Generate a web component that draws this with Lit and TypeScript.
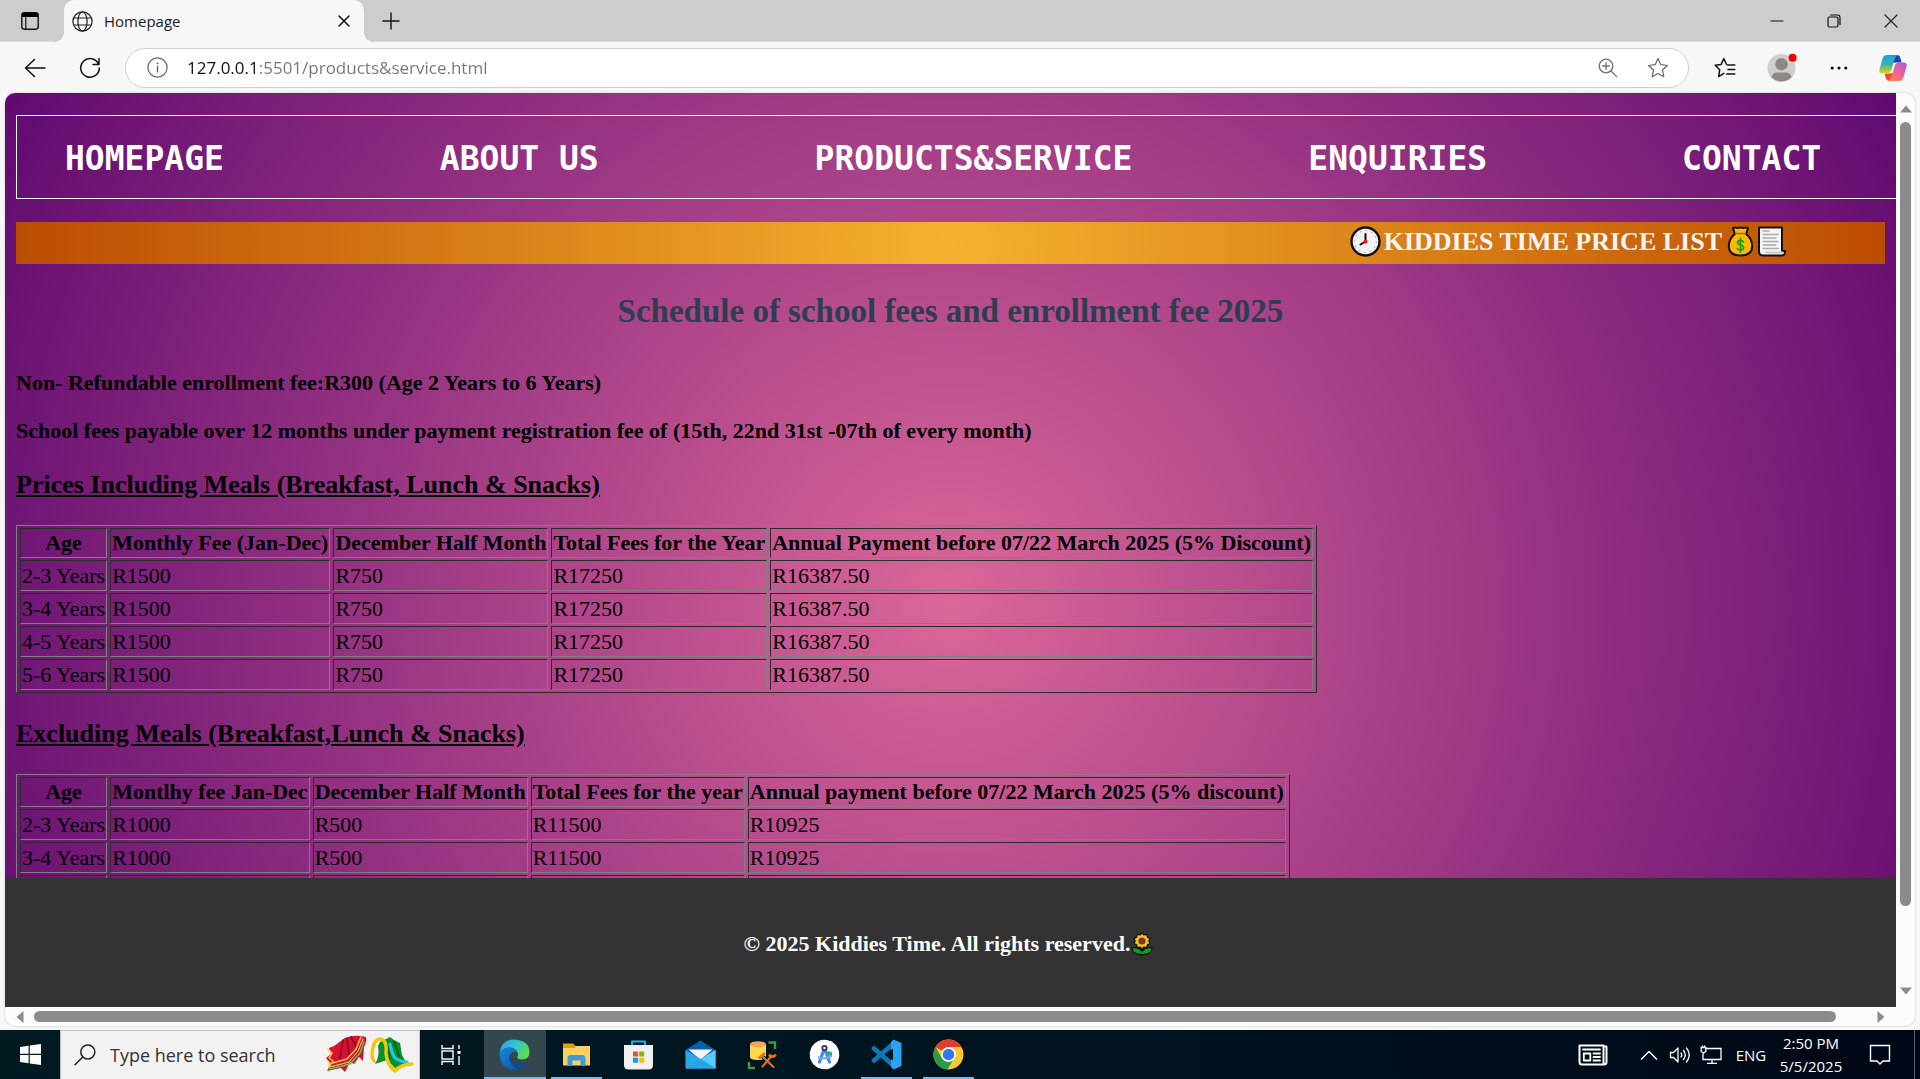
import { LitElement, html, css, svg } from "lit";
import { customElement } from "lit/decorators.js";
import { classMap } from "lit/directives/class-map.js";

const icon = (size: number, box: string, body: unknown) => html`<svg
  width=${size} height=${size} viewBox=${box} fill="none" stroke-linecap="round" stroke-linejoin="round" aria-hidden="true">${body}</svg>`;

const icons = {
  tabs: icon(20, "0 0 20 20", svg`<rect x="1.8" y="1.8" width="16.4" height="16.4" rx="2.6" stroke="#111" stroke-width="1.4"/><path d="M2 3.5Q2 2 4 2H16Q18 2 18 3.5V6H2Z" fill="#000"/><path d="M5.8 6V18" stroke="#111" stroke-width="1.2"/>`),
  globe: icon(21, "0 0 21 21", svg`<g stroke="#222" stroke-width="1.2"><circle cx="10.5" cy="10.5" r="9.6"/><ellipse cx="10.5" cy="10.5" rx="4.6" ry="9.6"/><path d="M1.8 7H19.2M1.8 14H19.2"/></g>`),
  close: icon(12, "0 0 12 12", svg`<path d="M1 1L11 11M11 1L1 11" stroke="#111" stroke-width="1.5"/>`),
  plus: icon(18, "0 0 18 18", svg`<path d="M9 1V17M1 9H17" stroke="#111" stroke-width="1.4"/>`),
  minimize: icon(14, "0 0 14 14", svg`<path d="M1 7H13" stroke="#111" stroke-width="1.2"/>`),
  restore: icon(14, "0 0 14 14", svg`<g stroke="#111" stroke-width="1.2"><rect x="1" y="3" width="10" height="10" rx="1.5"/><path d="M3.6 1H10.5Q13 1 13 3.5V10.4"/></g>`),
  exit: icon(14, "0 0 14 14", svg`<path d="M1 1L13 13M13 1L1 13" stroke="#222" stroke-width="1.2"/>`),
  back: icon(22, "0 0 22 22", svg`<path d="M21 11H1.5M10.5 2.5L1.5 11L10.5 19.5" stroke="#111" stroke-width="1.5"/>`),
  reload: icon(22, "0 0 22 22", svg`<path d="M19.6 7.4A9.3 9.3 0 1 0 20.3 11M20 1.6V7.6H14" stroke="#111" stroke-width="1.5"/>`),
  info: icon(21, "0 0 21 21", svg`<circle cx="10.5" cy="10.5" r="9.6" stroke="#666" stroke-width="1.2"/><path d="M10.5 9.5V15" stroke="#666" stroke-width="1.4"/><circle cx="10.5" cy="6.4" r="1" fill="#666"/>`),
  zoom: icon(20, "0 0 20 20", svg`<g stroke="#707070" stroke-width="1.3"><circle cx="8" cy="8" r="6.8"/><path d="M13 13L18.6 18.6M8 4.6V11.4M4.6 8H11.4"/></g>`),
  star: icon(22, "0 0 22 22", svg`<path d="M11 1.6L13.8 7.7L20.4 8.5L15.5 13L16.8 19.8L11 16.5L5.2 19.8L6.5 13L1.6 8.5L8.2 7.7Z" stroke="#666" stroke-width="1.2"/>`),
  favorites: icon(22, "0 0 22 22", svg`<path d="M12.4 7.2L9.8 1.6L7.1 7.4L1.2 8.2L5.7 12.7L4.7 19.6L9.8 16.4M13.6 8H20.8M14 12.5H20.8M12.6 17H20.8" stroke="#111" stroke-width="1.5"/>`),
  profile: icon(34, "0 0 34 34", svg`<circle cx="16.5" cy="17" r="14" fill="#d0cecb"/><circle cx="16.5" cy="13.2" r="6.2" fill="#8d8986"/><path d="M6.4 26Q8 21.5 12 21.5H21Q25 21.5 26.6 26A14 14 0 0 1 6.4 26Z" fill="#8d8986"/><circle cx="27.6" cy="6.8" r="4" fill="#f00000"/>`),
  more: icon(18, "0 0 18 18", svg`<g fill="#111"><circle cx="2.2" cy="9" r="1.6"/><circle cx="9" cy="9" r="1.6"/><circle cx="15.8" cy="9" r="1.6"/></g>`),
  copilot: icon(28, "0 0 28 28", svg`
    <defs>
      <linearGradient id="cpA" x1="0" y1="0" x2="0" y2="1"><stop offset="0" stop-color="#1b9af0"/><stop offset=".5" stop-color="#37b6a0"/><stop offset="1" stop-color="#f3cf10"/></linearGradient>
      <linearGradient id="cpB" x1="1" y1="0" x2="0" y2="1"><stop offset="0" stop-color="#a35be8"/><stop offset=".5" stop-color="#f0609a"/><stop offset="1" stop-color="#ff8b3d"/></linearGradient>
    </defs>
    <path d="M14 9L16 3Q17 1 18 1Q20.600 1 21.400 4L22.600 8.600H17Z" fill="#1745b8"/>
    <path d="M14 19L12 25Q11 27 9.800 27Q7.600 27 6.800 24L5.600 19.400H11Z" fill="#ee4a33"/>
    <path d="M8 1H18.600Q16.500 1.500 15.600 5L12.500 15.600Q11.200 19.600 8 19.600H3Q-.6 19.600 .6 15L3.400 5Q4.600 1 8 1Z" fill="url(#cpA)"/>
    <path d="M20 27H9.400Q11.500 26.500 12.400 23L15.500 12.400Q16.800 8.400 20 8.400H25Q28.600 8.400 27.400 13L24.600 23Q23.400 27 20 27Z" fill="url(#cpB)"/>`),
  clock: icon(31, "0 0 31 31", svg`<circle cx="15.500" cy="15.500" r="14" fill="#f2f2f2" stroke="#111" stroke-width="2.400"/><circle cx="15.500" cy="15.500" r="11" stroke="#bbb" stroke-width="1.200" stroke-dasharray="1 4.760"/><path d="M15.500 8V15.500L10.500 18.500" stroke="#111" stroke-width="2"/><circle cx="15.500" cy="15.500" r="2" fill="#e8102c"/>`),
  bag: icon(31, "0 0 31 31", svg`<path d="M8 2Q10 .8 12 2Q15.500 .8 19 2Q21 .8 23 2L21.200 8Q27.200 13 27.200 20Q27.200 29.500 15.500 29.500Q3.800 29.500 3.800 20Q3.800 13 9.800 8Z" fill="#fdb900" stroke="#111" stroke-width="2"/><path d="M10.500 7.500H20.500" stroke="#9a6c00" stroke-width="1.500"/><path d="M18.500 15.900Q17.200 14.300 15.500 14.300Q12.600 14.300 12.600 16.600Q12.600 18.300 15.500 19Q18.600 19.600 18.600 21.600Q18.600 24 15.500 24Q13.400 24 12.200 22.400M15.500 12V26" stroke="#12a012" stroke-width="1.700"/>`),
  page: icon(31, "0 0 31 31", svg`<path d="M3 1.500H26V25H29Q29 29.500 26 29.500H7Q3 29.500 3 25.500Z" fill="#f4f4f4" stroke="#111" stroke-width="2"/><path d="M10 26.500H27" stroke="#c9c9d2" stroke-width="2"/><path d="M7 5H13M7 8.500H22M7 12H20M7 15.500H22M7 19H20M7 22.500H22" stroke="#aaa" stroke-width="1.300"/>`),
  sunflower: icon(24, "0 0 24 24", svg`<path d="M12 12V22" stroke="#111" stroke-width="4"/><path d="M2 16Q8 14.500 12 19Q16 14.500 22 16Q22 22.500 12 22.500Q2 22.500 2 16Z" fill="#169a1c" stroke="#111" stroke-width="1.200"/><path d="M12 1L14 3L16.800 2.400L17.400 5.200L20 6.600L18.800 9L20 11.600L17.400 12.800L16.600 15.600L14 15L12 17L10 15L7.400 15.600L6.600 12.800L4 11.600L5.200 9L4 6.600L6.600 5.200L7.200 2.400L10 3Z" fill="#ffbe2e" stroke="#111" stroke-width="1.200"/><circle cx="12" cy="9" r="3.600" fill="#7a3d20"/>`),
  windows: icon(21, "0 0 21 21", svg`<path d="M0 3L8.600 1.800V9.800H0ZM9.800 1.600L21 0V9.800H9.800ZM0 11H8.600V19.200L0 18ZM9.800 11H21V21L9.800 19.400Z" fill="#fff"/>`),
  search: icon(22, "0 0 22 22", svg`<circle cx="13.800" cy="8" r="7" stroke="#222" stroke-width="1.500"/><path d="M8.800 13L1 20.800" stroke="#222" stroke-width="1.500"/>`),
  shawl: html`<svg width="90" height="42" viewBox="0 0 90 42" fill="none" stroke-linejoin="round" stroke-linecap="round" aria-hidden="true">
    <path d="M4 14L9 12L20 4Q30 0 41 3Q42 8 39 13L38 27L34 23L29 30L25 28L20 38L16 34L2 37L6 30L1 24L6 20Z" fill="#d3122f"/>
    <path d="M18 6L15 24M22 4L24 20M26 3L32 14" stroke="#93051c" stroke-width="1.600"/>
    <path d="M36 3L31 15L22 25L4 30M3 15L7 19L4 24L8 27L4 33" stroke="#f3c63a" stroke-width="1.500"/>
    <path d="M39 8L35 19L25 30L5 35" stroke="#58c94b" stroke-width="1.500"/><path d="M38 5L33 17L24 28L5 33" stroke="#ffe27a" stroke-width="1"/>
    <path d="M55 8Q61 5 65 3L69 6L75 9L77 21L82 30L72 36L62 26L50 30Q55 22 53 12Z" fill="#0b8f2c"/>
    <path d="M61 9L65 25M69 8L74 22" stroke="#056b1d" stroke-width="2.500"/>
    <path d="M65 10Q67 20 70 24Q76 28 82 28" stroke="#22c6e8" stroke-width="3.200"/>
    <path d="M49 27Q45 23 49 10Q52 3 58 6Q62 9 61 19Q62 31 70 37Q76 30 87 30" stroke="#eec70c" stroke-width="3.500"/>
  </svg>`,
  taskView: icon(22, "0 0 22 22", svg`<g stroke="#fff" stroke-width="1.400" stroke-linecap="butt" stroke-linejoin="miter"><path d="M2 1V4.500H13V1M2 21V17.500H13V21"/><rect x="2" y="7" width="11" height="8"/><path d="M19 1V5M19 12V21"/></g><rect x="17.500" y="7" width="3" height="3" fill="#fff"/>`),
  edge: icon(31, "0 0 31 31", svg`
    <defs>
      <linearGradient id="edA" x1="0" y1=".2" x2="1" y2=".6"><stop offset="0" stop-color="#27a9e8"/><stop offset=".5" stop-color="#33c3c9"/><stop offset="1" stop-color="#62dc4c"/></linearGradient>
      <linearGradient id="edB" x1="0" y1="0" x2="1" y2="1"><stop offset="0" stop-color="#1489dd"/><stop offset="1" stop-color="#0b55a8"/></linearGradient>
    </defs>
    <path d="M.5 14Q2 .5 15.500 .5Q30.500 1.500 30.500 13.500Q30 20.500 23 20.500Q17.500 20.500 18.500 17.500Q20 14.500 17.500 11.500Q13 7 7 9Q2 10.500 .5 14Z" fill="url(#edA)"/>
    <path d="M.5 15Q2 8.500 9.500 8.500Q16.500 8.800 18.500 13.500Q14 11.500 11.500 15Q8.500 20 13 25.500Q17 29.500 21 29.300Q18 30.800 14.500 30.500Q1 29.500 .5 15Z" fill="url(#edB)"/>
    <path d="M11.500 15Q9.500 24 18.500 24.700Q24 25 28.300 22.500Q25.500 28.500 20 29.700Q13 28.500 11 22.500Q9.500 18.500 11.500 15Z" fill="#124a91"/>`),
  explorer: icon(29, "0 0 29 29", svg`<path d="M1 3.500H11L14 6.500V11H1Z" fill="#e2a008"/><path d="M1 8H12L14 6H28V25.500H1Z" fill="#fdd062"/><path d="M5.500 26V18Q5.500 15 8.500 15H20.500Q23.500 15 23.500 18V26H18.500V20.500H10.500V26Z" fill="#3f9ad8"/>`),
  store: icon(31, "0 0 31 31", svg`<path d="M9 8V2.500H22V8" stroke="#29a9e6" stroke-width="2.200"/><path d="M1 6H30V26Q30 30.500 25.500 30.500H5.500Q1 30.500 1 26Z" fill="#f0f0f0"/><path d="M10 12.500H15V17.500H10Z" fill="#f25022"/><path d="M16.200 12.500H21.200V17.500H16.200Z" fill="#7fba00"/><path d="M10 18.700H15V23.700H10Z" fill="#00a4ef"/><path d="M16.200 18.700H21.200V23.700H16.200Z" fill="#ffb900"/>`),
  mail: icon(31, "0 0 31 31", svg`<path d="M.5 11L15.500 1.500L30.500 11V17H.5Z" fill="#0a5cb0"/><path d="M3.500 10.500H27.500L15.500 21Z" fill="#f4f4f4"/><path d="M.5 11L15.500 20L30.500 11V29.500H.5Z" fill="#2aa9ea"/><path d="M30.500 11V29.500L15.500 20Z" fill="#55cdfb"/><path d="M.5 29.500L15.500 20L30.500 29.500Z" fill="#27a4e6"/>`),
  database: icon(30, "0 0 30 30", svg`<path d="M3 4V17Q3 20 11 20Q19 20 19 17V4Z" fill="#fbd84c"/><ellipse cx="11" cy="4.200" rx="8" ry="3" fill="#f2a65a"/><path d="M21.500 2.500H28V9M2 22V28H8" stroke="#3f9a48" stroke-width="2.400" stroke-linecap="butt" stroke-linejoin="miter"/><path d="M15.500 26.500L25 15.500M16 17L26.500 27" stroke="#001721" stroke-width="4"/><path d="M15.500 26.500L25 15.500M16 17L26.500 27" stroke="#e8731b" stroke-width="2"/><path d="M12.500 17.500L17 13.800M22.800 15.500Q25 18 28 15.500" stroke="#e8731b" stroke-width="2.800"/>`),
  studio: icon(31, "0 0 31 31", svg`<circle cx="15.500" cy="15.500" r="13.600" fill="#fff"/><circle cx="15.500" cy="15.500" r="13.600" stroke="#fff" stroke-width="2.400" stroke-dasharray="3.500 1.800"/><circle cx="20" cy="15.500" r="3.200" fill="#34a853"/><path d="M15.500 9L10.500 23M15.500 9L20.500 23" stroke="#4285f4" stroke-width="3.200"/><path d="M9.500 18.500Q15.500 21 21.500 17" stroke="#7baaf7" stroke-width="2.200"/><circle cx="15.500" cy="9" r="2.200" fill="#fff" stroke="#27364a" stroke-width="1.800"/>`),
  code: icon(31, "0 0 31 31", svg`<path d="M3 9.500L23 27M3 21.500L23 4" stroke="#1177bd" stroke-width="4.600"/><path d="M22.500 .5L30.500 4V27L22.500 30.500L20 28V3Z" fill="#2aa4ef"/><path d="M22 9.500V21.500L14 15.500Z" fill="#001721"/>`),
  chrome: icon(31, "0 0 31 31", svg`<circle cx="15.500" cy="15.500" r="15" fill="#fcc934"/><path d="M15.500 .5A15 15 0 0 1 28.500 8H15.500A7.500 7.500 0 0 0 9 11.750L2.500 8A15 15 0 0 1 15.500 .5Z" fill="#e33b2e"/><path d="M2.500 8L9 19.250Q11.500 23 15.500 23L20 21L14.500 30.500A15 15 0 0 1 2.500 8Z" fill="#2d9a47"/><circle cx="15.500" cy="15.500" r="7.300" fill="#fff"/><circle cx="15.500" cy="15.500" r="5.800" fill="#2f78ee"/>`),
  news: icon(30, "0 0 30 30", svg`<path d="M26 6.500H28.500V22Q28.500 24.500 26 24.500H4Q1.500 24.500 1.500 22V5.500H25.500V22Q25.500 24.500 27 24" stroke="#fff" stroke-width="2"/><path d="M5 9.500H22M15.500 13.500H22M15.500 17H22M15.500 20.500H22" stroke="#fff" stroke-width="1.800"/><rect x="5.800" y="13.500" width="6.500" height="7" stroke="#fff" stroke-width="1.800"/>`),
  chevron: icon(18, "0 0 18 18", svg`<path d="M1.500 13L9 5.500L16.500 13" stroke="#fff" stroke-width="1.500"/>`),
  speaker: icon(22, "0 0 22 22", svg`<g stroke="#fff" stroke-width="1.300"><path d="M1.500 8.500H4.500L9 4V18L4.500 13.500H1.500Z"/><path d="M12 9Q13.500 11 12 13M14.500 6.500Q18 11 14.500 15.500M17.500 4Q23 11 17.500 18"/></g>`),
  network: icon(22, "0 0 22 22", svg`<g stroke="#fff" stroke-width="1.300" stroke-linejoin="miter"><path d="M6 4.500H21V15.500H3V9.500M12 15.500V19M7.500 19.300H16.500M1.200 3.500H5.800V7.500L3.500 9L1.200 7.500ZM2.500 3.500V1.800M4.500 3.500V1.800"/></g>`),
  notice: icon(22, "0 0 22 22", svg`<path d="M1.500 1.500H20.500V17H14L11 20L8 17H1.500Z" stroke="#fff" stroke-width="1.400" stroke-linejoin="miter"/>`),
  arrow: icon(12, "0 0 12 12", svg`<path d="M0 9.500L6 2.500L12 9.500Z" fill="#8b8b8b"/>`),
};

interface FeeTable {
  title: string;
  head: string[];
  rows: string[][];
}

const feeTables: FeeTable[] = [
  {
    title: "Prices Including Meals (Breakfast, Lunch & Snacks)",
    head: ["Age", "Monthly Fee (Jan-Dec)", "December Half Month", "Total Fees for the Year", "Annual Payment before 07/22 March 2025 (5% Discount)"],
    rows: ["2-3 Years", "3-4 Years", "4-5 Years", "5-6 Years"].map((age) => [age, "R1500", "R750", "R17250", "R16387.50"]),
  },
  {
    title: "Excluding Meals (Breakfast,Lunch & Snacks)",
    head: ["Age", "Montlhy fee Jan-Dec", "December Half Month", "Total Fees for the year", "Annual payment before 07/22 March 2025 (5% discount)"],
    rows: ["2-3 Years", "3-4 Years", "4-5 Years"].map((age) => [age, "R1000", "R500", "R11500", "R10925"]),
  },
];

const buttonReset = css`
  button {
    border: 0;
    padding: 0;
    background: none;
    font: inherit;
    color: inherit;
    display: flex;
    align-items: center;
    justify-content: center;
    flex: none;
    box-sizing: border-box;
  }
  svg { display: block; flex: none; }
`;

@customElement("browser-bar")
class BrowserBar extends LitElement {
  static styles = [buttonReset, css`
    :host { display: block; flex: none; background: #f7f7f7; font-family: "Open Sans", "Noto Sans", sans-serif; }
    .tabs { display: flex; height: 42px; background: #cdcdcd; box-shadow: inset 0 -1px #dcdcdc; }
    .tab-menu { width: 60px; margin-right: 4px; }
    .tab { position: relative; width: 300px; display: flex; align-items: center; gap: 11px; padding: 0 14px 0 8px; box-sizing: border-box; background: #f7f7f7; border-radius: 10px 10px 0 0; font-size: 15px; color: #1b1b1b; }
    .tab::before, .tab::after { content: ""; position: absolute; bottom: 0; width: 10px; height: 10px; }
    .tab::before { left: -10px; background: radial-gradient(circle at 0 0, #cdcdcd 10px, #f7f7f7 10px); }
    .tab::after { right: -10px; background: radial-gradient(circle at 100% 0, #cdcdcd 10px, #f7f7f7 10px); }
    .tab-name { flex: 1; }
    .new-tab { width: 54px; }
    .spacer { flex: 1; }
    .window { width: 57px; padding-right: 2px; }
    .tools { display: flex; align-items: center; height: 51px; padding-left: 8px; }
    .nav { width: 55px; padding-right: 2px; }
    .address { flex: 1; min-width: 0; display: flex; align-items: center; height: 40px; box-sizing: border-box; margin: 0 7px; padding: 0 19px 0 21px; border: 1px solid #cfcfcf; border-radius: 20px; background: #fff; }
    .url { flex: 1; min-width: 0; margin-left: 19px; padding: 0; border: 0; outline: 0; font-family: inherit; font-size: 17px; line-height: 28px; color: transparent; background: linear-gradient(90deg, #111 72px, #757575 72px); -webkit-background-clip: text; background-clip: text; }
    .inner { width: 22px; margin-left: 28px; }
    .tool { width: 57px; }
    .tool:last-child { width: 53px; padding-right: 2px; }
  `];

  render() {
    return html`
      <div class="tabs">
        <button class="tab-menu" aria-label="Tab actions">${icons.tabs}</button>
        <div class="tab">
          ${icons.globe}<span class="tab-name">Homepage</span>
          <button aria-label="Close tab">${icons.close}</button>
        </div>
        <button class="new-tab" aria-label="New tab">${icons.plus}</button>
        <span class="spacer"></span>
        <button class="window" aria-label="Minimize">${icons.minimize}</button>
        <button class="window" aria-label="Restore">${icons.restore}</button>
        <button class="window" aria-label="Close">${icons.exit}</button>
      </div>
      <div class="tools">
        <button class="nav" aria-label="Back">${icons.back}</button>
        <button class="nav" aria-label="Refresh">${icons.reload}</button>
        <div class="address">
          <button aria-label="Site information">${icons.info}</button>
          <input class="url" aria-label="Address" .value=${"127.0.0.1:5501/products&service.html"} />
          <button class="inner" aria-label="Zoom">${icons.zoom}</button>
          <button class="inner" aria-label="Add to favorites">${icons.star}</button>
        </div>
        <button class="tool" aria-label="Favorites">${icons.favorites}</button>
        <button class="tool" aria-label="Profile">${icons.profile}</button>
        <button class="tool" aria-label="Settings and more">${icons.more}</button>
        <button class="tool" aria-label="Copilot">${icons.copilot}</button>
      </div>`;
  }
}

@customElement("fees-page")
class FeesPage extends LitElement {
  static styles = css`
    :host { display: flex; flex-direction: column; min-width: 0; overflow: hidden; font-family: "Liberation Serif", "Times New Roman", serif; font-size: 22px; line-height: 26px; color: #000; background: radial-gradient(circle 1073px at 50% 510px, #da6798, #600a70); }
    svg { display: block; flex: none; }
    .body { flex: 1; min-height: 0; overflow: hidden; padding: 22px 11px 0; }
    .menu { display: grid; grid-template-columns: 375fr 375fr 494fr 374fr 214fr; align-items: center; height: 84px; box-sizing: border-box; padding-top: 3px; margin-right: -11px; padding-left: 48px; border: 1px solid #fff; border-right: 0; }
    .link { color: #fff; text-decoration: none; white-space: nowrap; font: bold 33px/40px "DejaVu Sans Mono", monospace; }
    .ticker { display: flex; align-items: center; justify-content: flex-end; height: 42px; margin-top: 23px; padding: 0 98px 3px 0; box-sizing: border-box; background: radial-gradient(circle farthest-corner, #f5b22e, #bc4c02); color: #f5f5f5; font-size: 26px; font-weight: bold; }
    .ticker span { margin: 0 3px; }
    .heading { margin: 28px 0 40px; text-align: center; font-size: 33px; line-height: 38px; color: #2c3e50; }
    .note { margin: 0 0 22px; font-weight: bold; }
    .section { margin: 26px 0 25px; font-size: 26px; line-height: 30px; text-decoration: underline; }
    .fees { border: 1px outset #808080; border-spacing: 3px 2px; }
    .cell { border: 1px inset #808080; padding: 1px; line-height: 27px; white-space: nowrap; }
    .head { line-height: 26px; }
    .foot { flex: none; display: flex; align-items: center; justify-content: center; height: 129px; padding: 3px 3px 0 0; box-sizing: border-box; background: #333; color: #fff; font-weight: bold; }
    .foot p { margin: 0; }
  `;

  private table(t: FeeTable) {
    return html`
      <h3 class="section">${t.title}</h3>
      <table class="fees" aria-label=${t.title}>
        <thead><tr>${t.head.map((c) => html`<th class="cell head" scope="col">${c}</th>`)}</tr></thead>
        <tbody>${t.rows.map((r) => html`<tr>${r.map((c) => html`<td class="cell">${c}</td>`)}</tr>`)}</tbody>
      </table>`;
  }

  render() {
    const links = ["HOMEPAGE", "ABOUT US", "PRODUCTS&SERVICE", "ENQUIRIES", "CONTACT"];
    return html`
      <main class="body">
        <nav class="menu">${links.map((l) => html`<a class="link" href="#">${l}</a>`)}</nav>
        <div class="ticker">${icons.clock}<span>KIDDIES TIME PRICE LIST</span>${icons.bag}${icons.page}</div>
        <h2 class="heading">Schedule of school fees and enrollment fee 2025</h2>
        <p class="note">Non- Refundable enrollment fee:R300 (Age 2 Years to 6 Years)</p>
        <p class="note">School fees payable over 12 months under payment registration fee of (15th, 22nd 31st -07th of every month)</p>
        ${feeTables.map((t) => this.table(t))}
      </main>
      <footer class="foot"><p>© 2025 Kiddies Time. All rights reserved.</p>${icons.sunflower}</footer>`;
  }
}

@customElement("task-bar")
class TaskBar extends LitElement {
  static styles = [buttonReset, css`
    :host { display: flex; flex: none; height: 49px; background: linear-gradient(90deg, #001a22, #00131f 60%, #000716); color: #fff; font-family: "Open Sans", "Noto Sans", sans-serif; }
    .start { width: 60px; }
    .search { display: flex; align-items: center; width: 360px; box-sizing: border-box; padding: 0 4px 0 13px; border: 1px solid #c0c0c6; border-bottom: 0; background: #f2f2f2; }
    .query { flex: 1; min-width: 0; margin-left: 14px; padding: 0; border: 0; outline: 0; background: none; font-family: inherit; font-size: 18px; line-height: 28px; color: #333; }
    .query::placeholder { color: #333; opacity: 1; }
    .view { width: 64px; padding-right: 3px; }
    .app { position: relative; width: 62px; padding-right: 2px; }
    .app.active { background: #34474f; }
    .app.open::after { content: ""; position: absolute; left: 5px; right: 6px; bottom: 0; height: 2px; background: #76b9ed; }
    .app.active::after { left: 0; right: 0; }
    .spacer { flex: 1; }
    .tray { width: 31px; }
    .news { width: 40px; margin-right: 20px; }
    .lang { width: 50px; font-size: 15px; }
    .time { width: 70px; flex-direction: column; font-size: 15px; line-height: 23px; }
    .notice { width: 69px; border-right: 1px solid #5a626c; margin-right: 5px; }
  `];

  render() {
    const apps = [
      { name: "Microsoft Edge", art: icons.edge, open: true, active: true },
      { name: "File Explorer", art: icons.explorer, open: true },
      { name: "Microsoft Store", art: icons.store },
      { name: "Mail", art: icons.mail },
      { name: "Database Tools", art: icons.database },
      { name: "Android Studio", art: icons.studio },
      { name: "Visual Studio Code", art: icons.code, open: true },
      { name: "Google Chrome", art: icons.chrome, open: true },
    ];
    return html`
      <button class="start" aria-label="Start">${icons.windows}</button>
      <label class="search">${icons.search}
        <input class="query" aria-label="Search" placeholder="Type here to search" />${icons.shawl}
      </label>
      <button class="view" aria-label="Task view">${icons.taskView}</button>
      ${apps.map((a) => html`<button class=${classMap({ app: true, open: !!a.open, active: !!a.active })} aria-label=${a.name}>${a.art}</button>`)}
      <span class="spacer"></span>
      <button class="news" aria-label="News">${icons.news}</button>
      <button class="tray" aria-label="Show hidden icons">${icons.chevron}</button>
      <button class="tray" aria-label="Volume">${icons.speaker}</button>
      <button class="tray" aria-label="Network">${icons.network}</button>
      <button class="lang">ENG</button>
      <button class="time"><span>2:50 PM</span><span>5/5/2025</span></button>
      <button class="notice" aria-label="Notifications">${icons.notice}</button>`;
  }
}

@customElement("app-root")
class AppRoot extends LitElement {
  static styles = css`
    :host { display: flex; flex-direction: column; height: 100vh; overflow: hidden; background: #f7f7f7; }
    svg { display: block; flex: none; }
    .frame { flex: 1; min-height: 0; display: grid; grid-template: minmax(0, 1fr) 19px / minmax(0, 1fr) 19px; margin: 0 5px 4px; border-radius: 10px; overflow: hidden; background: #fcfcfc; box-shadow: 0 0 2px #b5b5b5; }
    .bar { display: flex; align-items: center; }
    .vertical { flex-direction: column; padding: 10px 0; }
    .horizontal { padding: 0 9px; }
    .thumb { background: #8b8b8b; border-radius: 6px; }
    .vertical .thumb { width: 11px; margin-top: 7px; flex: 783; }
    .horizontal .thumb { height: 11px; margin-left: 8px; flex: 1802; }
    .vertical .rest { flex: 79; }
    .horizontal .rest { flex: 39; }
    .down { transform: rotate(180deg); }
    .left { transform: rotate(-90deg); }
    .right { transform: rotate(90deg); }
  `;

  render() {
    return html`
      <browser-bar></browser-bar>
      <div class="frame">
        <fees-page></fees-page>
        <div class="bar vertical"><span>${icons.arrow}</span><span class="thumb"></span><span class="rest"></span><span class="down">${icons.arrow}</span></div>
        <div class="bar horizontal"><span class="left">${icons.arrow}</span><span class="thumb"></span><span class="rest"></span><span class="right">${icons.arrow}</span></div>
      </div>
      <task-bar></task-bar>`;
  }
}
